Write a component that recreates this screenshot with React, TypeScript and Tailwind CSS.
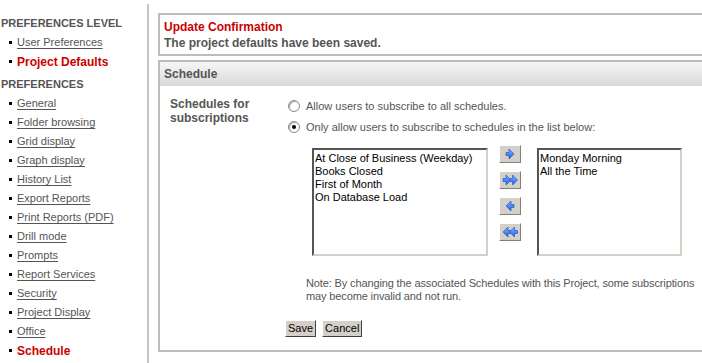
import React from "react";

type NavLink = { label: string; active?: boolean };

const levelNav: NavLink[] = [
  { label: "User Preferences" },
  { label: "Project Defaults", active: true },
];

const prefNav: NavLink[] = [
  { label: "General" },
  { label: "Folder browsing" },
  { label: "Grid display" },
  { label: "Graph display" },
  { label: "History List" },
  { label: "Export Reports" },
  { label: "Print Reports (PDF)" },
  { label: "Drill mode" },
  { label: "Prompts" },
  { label: "Report Services" },
  { label: "Security" },
  { label: "Project Display" },
  { label: "Office" },
  { label: "Schedule", active: true },
];

const available = ["At Close of Business (Weekday)", "Books Closed", "First of Month", "On Database Load"];
const selected = ["Monday Morning", "All the Time"];

const NavItem = ({ label, active }: NavLink) => (
  <li className="flex items-center h-[19px] pl-[8px]">
    <span className="w-[3px] h-[3px] bg-black mr-[5px]" />
    <a
      className={
        active
          ? "text-[12px] font-bold text-[#cc0000]"
          : "text-[11px] text-[#555] underline underline-offset-2"
      }
    >
      {label}
    </a>
  </li>
);

const Arrow = ({ dir }: { dir: "r" | "l" }) => (
  <path
    d={dir === "r" ? "M0 4 H3 V0.5 L8 5.5 L3 10.5 V7 H0 Z" : "M8 4 H5 V0.5 L0 5.5 L5 10.5 V7 H8 Z"}
    fill="url(#ag)"
    stroke="#1f56c8"
    strokeWidth="0.7"
  />
);

const ArrowButton = ({ dir, double }: { dir: "r" | "l"; double?: boolean }) => (
  <button className="w-[22px] h-[18px] bg-[#d4d0c8] border border-t-white border-l-white border-b-[#808080] border-r-[#808080] flex items-center justify-center">
    <svg width={double ? 17 : 10} height="12" viewBox={double ? "0 0 17 12" : "0 0 10 12"}>
      <defs>
        <linearGradient id="ag" x1="0" y1="0" x2="0" y2="1">
          <stop offset="0" stopColor="#8fb8ff" />
          <stop offset="0.5" stopColor="#4d8bf5" />
          <stop offset="1" stopColor="#2662df" />
        </linearGradient>
      </defs>
      <g transform="translate(1 0.5)">
        <Arrow dir={dir} />
      </g>
      {double && (
        <g transform="translate(7.5 0.5)">
          <Arrow dir={dir} />
        </g>
      )}
    </svg>
  </button>
);

const ListBox = ({ items, width }: { items: string[]; width: string }) => (
  <div
    className={`${width} h-[108px] bg-white border-2 border-t-[#555] border-l-[#555] border-r-[#d4d0c8] border-b-[#d4d0c8] pl-[1px] pt-[2px] text-[11px] leading-[13px] text-black`}
  >
    {items.map((i) => (
      <div key={i}>{i}</div>
    ))}
  </div>
);

const Radio = ({ checked }: { checked?: boolean }) => (
  <span className="w-[12px] h-[12px] rounded-full border border-[#8a8a8a] bg-white flex items-center justify-center shadow-[inset_1px_1px_1px_#aaa]">
    {checked && <span className="w-[4px] h-[4px] rounded-full bg-black" />}
  </span>
);

const WinButton = ({ children }: { children: React.ReactNode }) => (
  <button className="h-[17px] px-[2px] bg-[#d4d0c8] border border-t-white border-l-white border-b-[#404040] border-r-[#404040] text-[11px] leading-[13px] text-black">
    {children}
  </button>
);

export default function App() {
  return (
    <div className="w-[702px] h-[363px] overflow-hidden bg-white flex font-['Liberation_Sans',Arial,sans-serif]">
      <aside className="w-[147px] shrink-0 pt-[16px] pl-[1px]">
        <h3 className="text-[11px] font-bold text-[#555] leading-[14px]">PREFERENCES LEVEL</h3>
        <ul className="mt-[3px]">
          {levelNav.map((n) => (
            <NavItem key={n.label} {...n} />
          ))}
        </ul>
        <h3 className="mt-[6px] text-[11px] font-bold text-[#555] leading-[14px]">PREFERENCES</h3>
        <ul className="mt-[3px]">
          {prefNav.map((n) => (
            <NavItem key={n.label} {...n} />
          ))}
        </ul>
      </aside>

      <div className="w-[2px] mt-[4px] bg-[#c6c6c6] shrink-0" />

      <main className="pl-[9px] pt-[13px] flex flex-col gap-[4px]">
        <section className="w-[560px] h-[43px] border-2 border-[#bdbdbd] pl-[4px] pt-[4px]">
          <div className="text-[12px] font-bold text-[#cc0000] leading-[16px]">Update Confirmation</div>
          <div className="text-[12px] font-bold text-[#555] leading-[16px]">The project defaults have been saved.</div>
        </section>

        <section className="w-[560px] h-[292px] border-2 border-[#bdbdbd]">
          <div className="h-[24px] bg-gradient-to-b from-[#f6f6f6] to-[#d9d9d9] text-[12px] font-bold text-[#555] pl-[4px] flex items-center">
            Schedule
          </div>
          <div className="flex pl-[10px] pt-[11px]">
            <div className="w-[118px] text-[12px] font-bold text-[#555] leading-[14px]">
              Schedules for
              <br />
              subscriptions
            </div>
            <div className="flex flex-col text-[11px] text-[#555]">
              <label className="flex items-center gap-[6px] h-[16px] mt-[1px]">
                <Radio />
                Allow users to subscribe to all schedules.
              </label>
              <label className="flex items-center gap-[6px] h-[16px] mt-[5px]">
                <Radio checked />
                Only allow users to subscribe to schedules in the list below:
              </label>
              <div className="flex mt-[13px] ml-[24px]">
                <ListBox items={available} width="w-[176px]" />
                <div className="flex flex-col ml-[11px] mt-[-3px] gap-[8px]">
                  <ArrowButton dir="r" />
                  <ArrowButton dir="r" double />
                  <ArrowButton dir="l" />
                  <ArrowButton dir="l" double />
                </div>
                <div className="ml-[16px]">
                  <ListBox items={selected} width="w-[145px]" />
                </div>
              </div>
              <p className="mt-[21px] ml-[18px] leading-[13px] w-[392px] tracking-[-0.13px]">
                Note: By changing the associated Schedules with this Project, some subscriptions may become invalid and not run.
              </p>
              <div className="flex gap-[6px] mt-[17px] ml-[-3px]">
                <WinButton>Save</WinButton>
                <WinButton>Cancel</WinButton>
              </div>
            </div>
          </div>
        </section>
      </main>
    </div>
  );
}
